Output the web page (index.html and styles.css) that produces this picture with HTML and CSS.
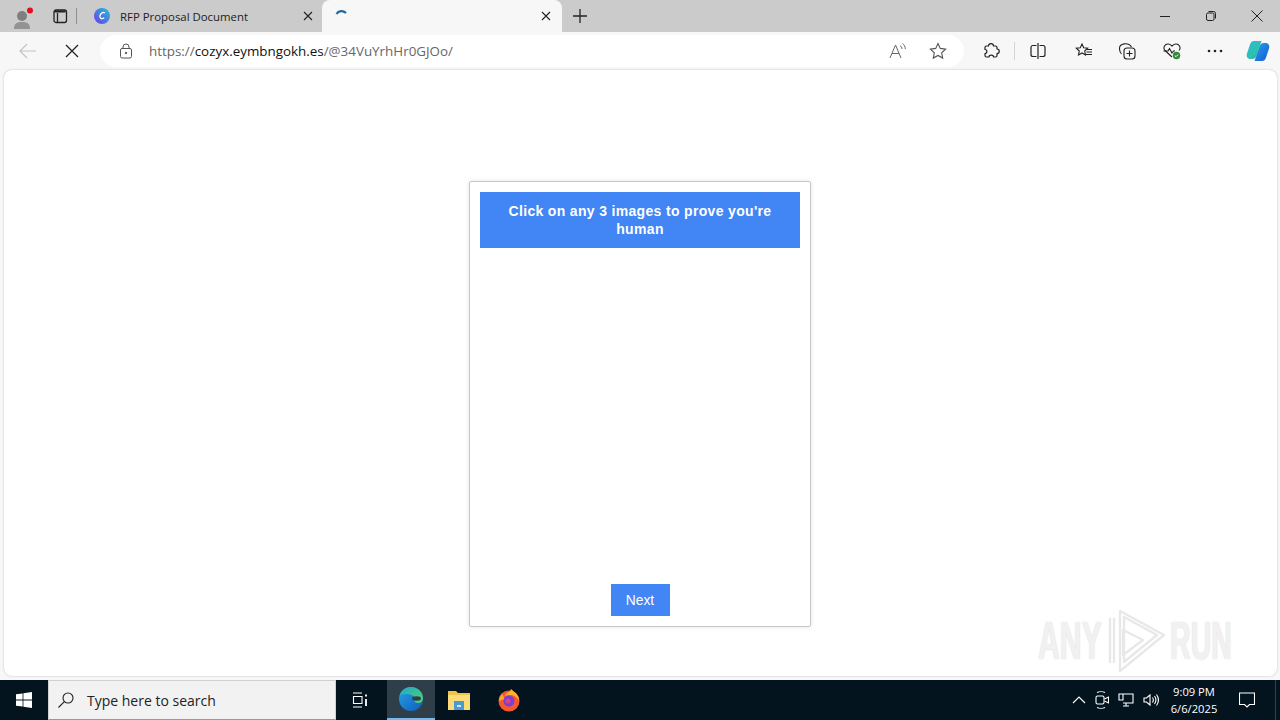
FILE: index.html
```html
<!DOCTYPE html>
<html lang="en">
<head>
<meta charset="utf-8">
<title>RFP Proposal Document</title>
<link rel="stylesheet" href="styles.css">
</head>
<body>
<header class="tabstrip">
  <div class="profile">
    <svg width="24" height="26" viewBox="0 0 24 26"><circle cx="11" cy="13" r="5" fill="#7f7f7f"/><path d="M3 26c0-6 3-7 8-7s8 1 8 7z" fill="#939393"/><circle cx="19" cy="7.500" r="3" fill="#e3101f"/></svg>
  </div>
  <div class="tabs-btn">
    <svg width="16" height="16" viewBox="0 0 16 16" fill="none" stroke="#222" stroke-width="1.300"><rect x="2" y="2" width="12.500" height="12.500" rx="2"/><path d="M5.500 5v9.500"/><path d="M2.500 3.500h11" stroke-width="2"/></svg>
  </div>
  <div class="sep"></div>
  <div class="tab">
    <svg class="fav" width="16" height="16" viewBox="0 0 16 16"><defs><linearGradient id="cv" x1="0" y1="1" x2="1" y2="0"><stop offset="0" stop-color="#6a3de8"/><stop offset="1" stop-color="#1fc0d8"/></linearGradient></defs><circle cx="8" cy="8" r="8" fill="url(#cv)"/><path d="M10.800 5.200C9.800 3.800 7 4.500 6 7.500c-.8 2.600 1.500 4.300 4.200 2.300" fill="none" stroke="#fff" stroke-width="1.300"/></svg>
    <span class="tab-title">RFP Proposal Document</span>
    <svg width="10" height="10" viewBox="0 0 10 10" stroke="#222" stroke-width="1.100"><path d="M1 1l8 8M9 1l-8 8"/></svg>
  </div>
  <div class="tab active">
    <svg class="fav" width="16" height="16" viewBox="0 0 16 16" fill="none"><path d="M1.500 6C3.500 2.500 8 2 11 5" stroke="#1d6a9c" stroke-width="2.200"/></svg>
    <span class="tab-title"></span>
    <svg width="10" height="10" viewBox="0 0 10 10" stroke="#222" stroke-width="1.100"><path d="M1 1l8 8M9 1l-8 8"/></svg>
  </div>
  <div class="newtab">
    <svg width="14" height="14" viewBox="0 0 14 14" stroke="#222" stroke-width="1.300"><path d="M7 0v14M0 7h14"/></svg>
  </div>
  <div class="spacer"></div>
  <div class="winbtns">
    <div class="winbtn"><svg width="10" height="10" viewBox="0 0 10 10" stroke="#222"><path d="M0 5.500h10"/></svg></div>
    <div class="winbtn"><svg width="10" height="10" viewBox="0 0 10 10" fill="none" stroke="#222"><rect x=".5" y="2" width="7.500" height="7.500" rx="1.500"/><path d="M2.500 .5h5a2 2 0 0 1 2 2v5"/></svg></div>
    <div class="winbtn"><svg width="12" height="12" viewBox="0 0 12 12" stroke="#222"><path d="M.5.500l11 11M11.500.500l-11 11"/></svg></div>
  </div>
</header>
<nav class="toolbar">
  <div class="navbtn"><svg width="18" height="16" viewBox="0 0 18 16" fill="none" stroke="#c4c4c4" stroke-width="1.200"><path d="M17 8H1M8 1L1 8l7 7"/></svg></div>
  <div class="navbtn"><svg width="14" height="14" viewBox="0 0 14 14" stroke="#222" stroke-width="1.300"><path d="M1 1l12 12M13 1L1 13"/></svg></div>
  <div class="address">
    <svg width="14" height="16" viewBox="0 0 14 16" fill="none" stroke="#555"><rect x="1.500" y="5.500" width="11" height="9.500" rx="1.500"/><path d="M4 5.500V4a3 3 0 0 1 6 0v1.500"/><circle cx="7" cy="10" r=".8" fill="#555"/></svg>
    <div class="url"><span class="dim">https://</span><span class="host">cozyx.eymbngokh.es</span><span class="dim">/@34VuYrhHr0GJOo/</span></div>
    <svg class="addr-ic" width="18" height="16" viewBox="0 0 18 16" fill="none" stroke="#666" stroke-width="1"><path d="M1 15L6.500 2 12 15M3 10.500h7"/><path d="M11 2.500c1.200.8 2 2 2 3.500M13.500 .5c1.700 1.300 2.800 3.200 2.800 5.500" stroke-width="1"/></svg>
    <svg class="addr-ic" width="18" height="18" viewBox="0 0 18 18" fill="none" stroke="#555" stroke-width="1.100"><path d="M9 1.500l2.300 4.900 5.300.7-3.900 3.700 1 5.300L9 13.500l-4.700 2.600 1-5.300-3.900-3.700 5.300-.7z"/></svg>
  </div>
  <div class="tools">
    <div class="tool"><svg width="18" height="18" viewBox="0 0 18 18" fill="none" stroke="#222" stroke-width="1.200" stroke-linejoin="round"><path d="M6.500 4C6.500 .8 11.500 .8 11.500 4h2a1.500 1.500 0 0 1 1.500 1.500V7c3 0 3 4.500 0 4.500v2a1.500 1.500 0 0 1-1.500 1.500h-2c0-2.500-4.500-2.500-4.500 0H4.500A1.500 1.500 0 0 1 3 13.500v-2c2.500 0 2.500-4 0-4v-2A1.500 1.500 0 0 1 4.500 4z"/></svg></div>
    <div class="tool-sep"></div>
    <div class="tool"><svg width="18" height="18" viewBox="0 0 18 18" fill="none" stroke="#222" stroke-width="1.200"><path d="M7.500 3.500H4a2 2 0 0 0-2 2v7a2 2 0 0 0 2 2h3.500M10.500 3.500H14a2 2 0 0 1 2 2v7a2 2 0 0 1-2 2h-3.500M9 1v16"/></svg></div>
    <div class="tool"><svg width="18" height="18" viewBox="-1 0 18 18" fill="none" stroke="#222" stroke-width="1.100"><path d="M7 2l1.700 3.700 4 .5-3 2.800.8 4L7 11l-3.500 2 .8-4-3-2.800 4-.5z"/><path d="M12 7.500h5M11.500 10h5.500M10.500 12.500H17"/></svg></div>
    <div class="tool"><svg width="18" height="18" viewBox="0 0 18 18" fill="none" stroke="#222" stroke-width="1.100"><rect x="6" y="6" width="11" height="11" rx="3"/><path d="M11.500 8.500v6M8.500 11.500h6"/><path d="M3.500 12C1 9 1 5 2.500 3.500 4 2 8 1 11 2.500c1 .5 2 1.500 2.500 2.500"/></svg></div>
    <div class="tool"><svg width="20" height="18" viewBox="-1 0 20 18" fill="none"><path d="M10 15L3 8.500C.5 5.500 3 1.500 6.500 2c1.500.2 2.500 1 3.500 2 1-1 2-1.800 3.500-2 3.500-.5 6 3.500 3.500 6.500" stroke="#222" stroke-width="1.100"/><path d="M1.500 9H6l1.500-2.500L10 11l1.500-2H13" stroke="#222" stroke-width="1.100"/><circle cx="14.500" cy="13.500" r="3.700" fill="#2e8b37"/><path d="M12.800 13.500l1.200 1.200 2.200-2.200" stroke="#fff" stroke-width="1"/></svg></div>
    <div class="tool"><svg width="16" height="4" viewBox="0 0 16 4" fill="#222"><circle cx="2" cy="2" r="1.300"/><circle cx="8" cy="2" r="1.300"/><circle cx="14" cy="2" r="1.300"/></svg></div>
    <div class="tool copilot"><svg width="24" height="24" viewBox="0 0 24 24"><defs><linearGradient id="cp1" x1="0" y1="0" x2="1" y2="1"><stop offset="0" stop-color="#2fb4e8"/><stop offset=".6" stop-color="#2cc4a8"/><stop offset="1" stop-color="#1b8fd8"/></linearGradient><linearGradient id="cp2" x1="0" y1="0" x2="1" y2="1"><stop offset="0" stop-color="#29a4ea"/><stop offset="1" stop-color="#1558d0"/></linearGradient></defs><path d="M8 2h7.500l-5 14.500C9.800 19 8 20 6 20H4.500C1.500 20 0 17.500 1 14.500l3-9C4.800 3 6 2 8 2z" fill="url(#cp1)"/><path d="M16 22H8.500l5-14.500C14.200 5 16 4 18 4h1.500c3 0 4.500 2.500 3.500 5.500l-3 9c-.8 2.500-2 3.500-4 3.500z" fill="url(#cp2)"/></svg></div>
  </div>
</nav>
<main class="viewport">
  <section class="card">
    <h1 class="prompt">Click on any 3 images to prove you're human</h1>
    <div class="grid"></div>
    <button class="next" type="button">Next</button>
  </section>
  <div class="watermark">
    <span class="wm-text wm-any">ANY</span>
    <svg class="wm-logo" width="60" height="62" viewBox="0 0 60 62" fill="none" stroke="#e8e8e8" stroke-width="2.400" stroke-linejoin="round"><path d="M15 1L59 25 15 61z"/><path d="M19 7L52 25 19 52z"/><path d="M18 20L38 30 18 45z"/><path d="M5 8v45M9 8v45"/></svg>
    <span class="wm-text wm-run">RUN</span>
  </div>
</main>
<footer class="taskbar">
  <div class="start"><svg width="16" height="16" viewBox="0 0 16 16" fill="#fff"><path d="M0 2.300l6.600-.9v6.200H0zM7.400 1.300L16 0v7.600H7.400zM0 8.400h6.600v6.200L0 13.700zM7.400 8.400H16V16l-8.600-1.200z"/></svg></div>
  <div class="search">
    <svg width="16" height="16" viewBox="0 0 16 16" fill="none" stroke="#222" stroke-width="1.100"><circle cx="10" cy="6" r="5"/><path d="M6.300 9.700L.5 15.500"/></svg>
    <span>Type here to search</span>
  </div>
  <div class="tb-item tb-taskview"><svg width="16" height="16" viewBox="0 0 16 16" fill="none" stroke="#fff" stroke-width="1.100"><path d="M1 1h9M1 15h9M1.500 4.500h8.500v7H1.500z"/><path d="M14 2.500v2M14 7v7" stroke-width="1.800"/></svg></div>
  <div class="tb-item current"><svg width="26" height="26" viewBox="0 0 26 26"><defs><linearGradient id="ed1" x1="0" y1="0" x2="1" y2="1"><stop offset="0" stop-color="#1fa8c8"/><stop offset="1" stop-color="#55d46a"/></linearGradient><linearGradient id="ed2" x1="0" y1="0" x2="1" y2="1"><stop offset="0" stop-color="#2a9fe8"/><stop offset="1" stop-color="#0d5fb8"/></linearGradient></defs><circle cx="13" cy="13" r="12" fill="url(#ed2)"/><path d="M1.500 10C3 4 8 1 13 1c6 0 12 4.500 12 11 0 3-2 5-5 5-2 0-3.500-.8-3.500-2 1-1 1.500-2 .5-3.500C15 9 11 7.500 7 8c-2.500.3-4.500 1-5.500 2z" fill="url(#ed1)"/><ellipse cx="18.500" cy="12.500" rx="4.500" ry="2.200" fill="#2f3f49"/></svg></div>
  <div class="tb-item tb-folder"><svg width="22" height="19" viewBox="0 0 22 19"><path d="M0 0h8l2 2h12v17H0z" fill="#efc24a"/><path d="M0 4h22v15H0z" fill="#fbdc78"/><path d="M6 10h10v9H6z" fill="#4a9ad4"/><path d="M9 14h4v2H9z" fill="#d4e6f2"/></svg></div>
  <div class="tb-item"><svg width="24" height="24" viewBox="0 0 24 24"><circle cx="12" cy="13" r="10.500" fill="#f4582c"/><path d="M14 1c3 3 8 5 8 12-3-6-9-7-14-5 1-4 5-3 6-7z" fill="#fcb02c"/><path d="M2 13c0-3 1-5 3-7l3 5z" fill="#f9a825"/><circle cx="12" cy="13" r="5.500" fill="#7b3fd9"/><circle cx="11" cy="13" r="2.500" fill="#e0417f"/></svg></div>
  <div class="spacer"></div>
  <div class="tray">
    <svg width="14" height="8" viewBox="0 0 14 8" fill="none" stroke="#fff" stroke-width="1.100"><path d="M1 7l6-6 6 6"/></svg>
    <svg width="14" height="18" viewBox="0 0 14 18" fill="none" stroke="#fff" stroke-width="1.100"><path d="M2 1.500c2-1 6-1 8 0M2 16.500c2 1 6 1 8 0"/><rect x="1" y="5" width="8" height="8" rx="1.500"/><path d="M9.500 8l4-2v6l-4-2"/></svg>
    <svg width="16" height="14" viewBox="0 0 16 14" fill="none" stroke="#fff" stroke-width="1.100"><path d="M3 1h12v9H5M1 1v6h4V1zM8 10v3M5 13h6"/></svg>
    <svg width="16" height="14" viewBox="0 0 16 14" fill="none" stroke="#fff" stroke-width="1.100"><path d="M1 5v4h2.500L7 12V2L3.500 5zM9.500 4.500c1 1.500 1 3.500 0 5M11.500 3c1.800 2.500 1.800 5.500 0 8M13.500 1.500c2.500 3.500 2.500 7.500 0 11"/></svg>
  </div>
  <div class="clock"><span>9:09 PM</span><span>6/6/2025</span></div>
  <div class="notify"><svg width="16" height="16" viewBox="0 0 16 16" fill="none" stroke="#fff" stroke-width="1.100"><path d="M.5 1h15v11.500h-5L8 15l-2.500-2.500h-5z"/></svg></div>
  <div class="show-desktop"></div>
</footer>
</body>
</html>
```
FILE: styles.css
```css
* { box-sizing: border-box; }
html, body { margin: 0; height: 100%; }
body {
  width: 1280px; height: 720px; overflow: hidden;
  display: flex; flex-direction: column;
  font-family: "Open Sans", "Noto Sans", sans-serif;
  background: #f7f7f7; color: #222;
}
svg { display: block; flex: none; }
.spacer { flex: 1; }

.tabstrip { height: 32px; background: #cbcbcb; display: flex; align-items: center; flex: none; }
.profile { width: 44px; height: 32px; display: flex; align-items: center; padding-left: 11px; }
.tabs-btn { width: 32px; height: 32px; display: flex; align-items: center; justify-content: center; }
.sep { width: 1px; height: 16px; background: #8f8f8f; margin-right: 7px; }
.tab { width: 238px; height: 32px; display: flex; align-items: center; padding: 0 9px 0 10px; }
.tab.active { background: #f7f7f7; border-radius: 8px 8px 0 0; width: 240px; padding: 0 11px 0 13px; }
.fav { margin-right: 10px; }
.tab-title { flex: 1; font-size: 11.400px; white-space: nowrap; color: #222; }
.newtab { width: 36px; display: flex; justify-content: center; }
.winbtns { display: flex; }
.winbtn { width: 46px; height: 32px; display: flex; align-items: center; justify-content: center; }

.toolbar { height: 38px; background: #f7f7f7; display: flex; align-items: center; flex: none; }
.navbtn { width: 44px; display: flex; justify-content: center; }
.navbtn:first-child { margin-left: 6px; }
.address {
  width: 864px; height: 32px; margin-left: 6px; background: #fff; border-radius: 16px;
  display: flex; align-items: center; padding: 0 17px 0 19px;
}
.url { flex: 1; margin-left: 16px; font-size: 13.400px; white-space: nowrap; }
.dim { color: #666; }
.host { color: #111; }
.addr-ic { margin-left: 22px; }
.tools { display: flex; align-items: center; margin-left: 5px; }
.tool { width: 44.250px; height: 32px; display: flex; align-items: center; justify-content: center; }
.tool-sep { width: 1px; height: 18px; background: #d4d4d4; margin: 0 1px; }
.copilot { margin-left: -2px; }

.viewport {
  flex: 1; margin: 0 3px 4px 4px; padding: 111px 1px 0 0; background: #fff; border-radius: 8px;
  box-shadow: 0 0 2px rgba(0,0,0,.25);
  display: flex; justify-content: center; align-items: flex-start;
  position: relative;
}
.card {
  width: 342px; height: 446px; padding: 10px; background: #fff;
  border: 1px solid #c8c8c8; border-radius: 2px;
  box-shadow: 0 0 4px rgba(0,0,0,.12);
  display: flex; flex-direction: column; align-items: center;
}
.prompt {
  width: 320px; height: 56px; margin: 0; padding: 10px 20px; background: #4285f4; color: #fff;
  font: bold 14px/18px "Liberation Sans", Arial, sans-serif; letter-spacing: .33px; text-align: center;
}
.grid { flex: 1; }
.next {
  width: 59px; height: 32px; border: 0; background: #4285f4; color: #fff;
  font: 13.800px "Liberation Sans", Arial, sans-serif;
}
.watermark { position: absolute; right: 45px; bottom: 4px; display: flex; align-items: center; }
.wm-logo { margin: 0 5px 0 3px; }
.wm-text {
  display: block; font: bold 53px/62px "Liberation Sans", sans-serif; color: #f1f1f1;
  text-shadow: 0 0 2px #d8d8d8; transform-origin: left center; white-space: nowrap;
}
.wm-any { width: 64px; transform: scaleX(.57); }
.wm-run { width: 62px; transform: scaleX(.54); }

.taskbar { height: 40px; background: #03141f; display: flex; align-items: center; flex: none; }
.start { width: 48px; height: 40px; display: flex; align-items: center; justify-content: center; }
.search {
  width: 288px; height: 40px; background: #f2f2f2; border: 1px solid #d0d0d0; border-bottom-color: #999;
  display: flex; align-items: center; gap: 13px; padding-left: 9px; font-size: 14px; color: #222;
}
.tb-item { width: 48px; height: 40px; display: flex; align-items: center; justify-content: center; }
.tb-taskview { margin-right: 3px; }
.tb-folder { margin-right: 2px; }
.tb-item.current { background: #2f3f49; border-bottom: 2px solid #76b9ed; }
.tray { display: flex; align-items: center; gap: 9px; margin-right: 6px; }
.clock {
  width: 58px; display: flex; flex-direction: column; align-items: center;
  font-size: 11.200px; line-height: 17px; color: #fff;
}
.notify { width: 48px; display: flex; justify-content: center; }
.show-desktop { width: 5px; height: 40px; margin-left: 4px; border-left: 1px solid #33434e; }
```
